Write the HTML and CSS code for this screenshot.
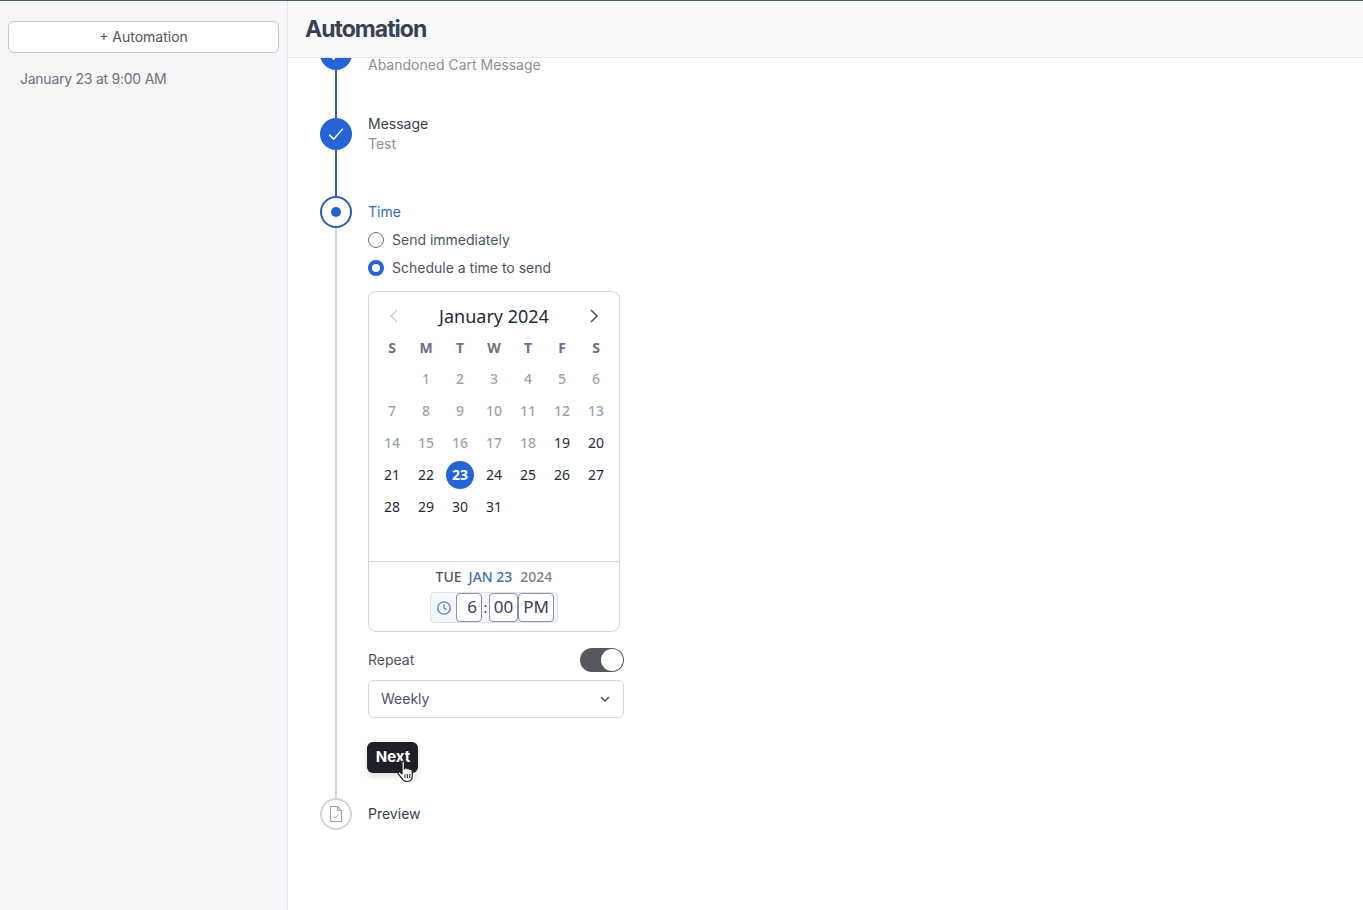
FILE: index.html
```html
<!DOCTYPE html>
<html>
<head>
    <title>Automation</title>
    <link rel="stylesheet" href="styles.css">
</head>
<body>
    <aside class="sidebar">
        <button class="add-button">+ Automation</button>
        <p class="sidebar-item">January 23 at 9:00 AM</p>
    </aside>
    <main class="main">
        <header class="topbar">
            <h1>Automation</h1>
        </header>
        <div class="scroller">
            <div class="steps">
                <div class="step step-first">
                    <div class="rail">
                        <span class="circle circle-done">
                            <svg width="20" height="20" viewBox="0 0 16 16"><path d="M2.5 8.5l3.6 3.6 7.4-8.4" fill="none" stroke="#fff" stroke-width="1.2"/></svg>
                        </span>
                        <span class="line"></span>
                    </div>
                    <div class="step-text-first">Abandoned Cart Message</div>
                </div>
                <div class="step step-second">
                    <div class="rail">
                        <span class="circle circle-done">
                            <svg width="20" height="20" viewBox="0 0 16 16"><path d="M2.5 8.5l3.6 3.6 7.4-8.4" fill="none" stroke="#fff" stroke-width="1.2"/></svg>
                        </span>
                        <span class="line"></span>
                    </div>
                    <div class="step-text">
                        <div class="step-title">Message</div>
                        <div class="step-sub">Test</div>
                    </div>
                </div>
                <div class="step">
                    <div class="rail">
                        <span class="circle circle-current"><span class="dot"></span></span>
                        <span class="line line-todo"></span>
                    </div>
                    <div class="step-body">
                        <div class="step-title step-title-current">Time</div>
                        <label class="radio-row"><span class="radio"></span><span class="radio-label">Send immediately</span></label>
                        <label class="radio-row"><span class="radio radio-on"></span><span class="radio-label">Schedule a time to send</span></label>

                        <div class="calendar">
                            <div class="cal-head">
                                <svg width="16" height="16" viewBox="0 0 16 16"><path d="M11 2L5 8l6 6" fill="none" stroke="#d1d5db" stroke-width="1.6"/></svg>
                                <span class="cal-month">January 2024</span>
                                <svg width="16" height="16" viewBox="0 0 16 16"><path d="M5 2l6 6-6 6" fill="none" stroke="#4b5563" stroke-width="1.6"/></svg>
                            </div>
                            <div class="cal-grid cal-labels">
                                <span>S</span><span>M</span><span>T</span><span>W</span><span>T</span><span>F</span><span>S</span>
                            </div>
                            <div class="cal-grid cal-days">
                                <span></span>
                                <span class="off">1</span><span class="off">2</span><span class="off">3</span><span class="off">4</span><span class="off">5</span><span class="off">6</span>
                                <span class="off">7</span><span class="off">8</span><span class="off">9</span><span class="off">10</span><span class="off">11</span><span class="off">12</span><span class="off">13</span>
                                <span class="off">14</span><span class="off">15</span><span class="off">16</span><span class="off">17</span><span class="off">18</span><span>19</span><span>20</span>
                                <span>21</span><span>22</span><span class="today">23</span><span>24</span><span>25</span><span>26</span><span>27</span>
                                <span>28</span><span>29</span><span>30</span><span>31</span>
                            </div>
                            <div class="cal-foot">
                                <div class="cal-date"><span>TUE</span><span class="cal-date-blue">JAN 23</span><span class="cal-date-year">2024</span></div>
                                <div class="time-box">
                                    <svg class="clock" width="16" height="16" viewBox="0 0 16 16"><circle cx="8" cy="8" r="6.2" fill="none" stroke="#4f86c6" stroke-width="1.3"/><path d="M8 4.400V8l2.400 1.600" fill="none" stroke="#4f86c6" stroke-width="1.3"/></svg>
                                    <span class="time-field time-hour">6</span>
                                    <span class="time-colon">:</span>
                                    <span class="time-field time-min">00</span>
                                    <span class="time-field time-ampm">PM</span>
                                </div>
                            </div>
                        </div>

                        <div class="repeat-row">
                            <span class="nudge-up">Repeat</span>
                            <span class="toggle"><span class="knob"></span></span>
                        </div>
                        <div class="select">
                            <span class="nudge-up">Weekly</span>
                            <svg width="12" height="12" viewBox="0 0 12 12"><path d="M2 4l4 4 4-4" fill="none" stroke="#4b5563" stroke-width="1.5"/></svg>
                        </div>
                        <div class="next-wrap">
                            <button class="next-button">Next</button>
                            <svg class="cursor" width="18" height="24" viewBox="0 0 18 24"><path d="M5 2.200c0-1.500 2.400-1.500 2.400 0v7l.3-1c1.400-.6 2.300-.2 2.500.6 1.300-.6 2.200-.2 2.500.7 1.400-.5 2.500.1 2.500 1.500v5.200c0 3-2 5.300-5 5.300-3 0-4.300-1.200-5.500-3.300L1.300 13.800c-.8-1.500.9-2.800 2.200-1.500L5 14z" fill="#fff" stroke="#1a1c22" stroke-width="1.200" stroke-linejoin="round"/><path d="M8 14v4M10.400 14v4M12.800 14v4" stroke="#1a1c22" stroke-width="1"/></svg>
                        </div>
                    </div>
                </div>
                <div class="step">
                    <div class="rail">
                        <span class="circle circle-todo">
                            <svg width="18" height="18" viewBox="0 0 18 18"><path d="M3.500 1.500h7l4 4v11h-11zM10.500 1.500v4h4" fill="none" stroke="#9ca3af" stroke-width="1.100"/><path d="M6.500 11l2 2 3-3.500" fill="none" stroke="#9ca3af" stroke-width="1"/></svg>
                        </span>
                    </div>
                    <div class="step-body">
                        <div class="step-title">Preview</div>
                    </div>
                </div>
            </div>
        </div>
    </main>
</body>
</html>
```

FILE: styles.css
```css
* {
    box-sizing: border-box;
}
body {
    font-family: 'Inter', 'Liberation Sans', sans-serif;
    font-size: 14px;
    color: #374151;
    background-color: #fff;
    display: flex;
    height: 100vh;
    margin: 0;
    overflow: hidden;
    border-top: 1px solid #4b6072;
}
.nudge-up {
    margin-top: -2px;
}

/* sidebar */
.sidebar {
    width: 288px;
    flex-shrink: 0;
    padding: 20px 8px 0;
    background-color: #f4f6f8;
    border-right: 1px solid #e5e7eb;
}
.add-button {
    display: block;
    width: 271px;
    height: 32px;
    padding: 0 0 2px;
    background-color: #fff;
    border: 1px solid #c4c8ce;
    border-radius: 6px;
    color: #4b5563;
    font-family: inherit;
    font-size: 14px;
}
.sidebar-item {
    margin: 16px 0 0 12px;
    line-height: 20px;
    letter-spacing: -0.25px;
    color: #6b7280;
}

/* main */
.main {
    flex: 1;
    display: flex;
    flex-direction: column;
    min-width: 0;
}
.topbar {
    height: 57px;
    flex-shrink: 0;
    padding: 0 0 0 17px;
    display: flex;
    align-items: center;
    background-color: #f9fafb;
    border-bottom: 1px solid #e5e7eb;
}
.topbar h1 {
    margin: 0 0 1px;
    font-size: 23px;
    font-weight: 700;
    letter-spacing: -1px;
    color: #374151;
}
.scroller {
    flex: 1;
    overflow: hidden;
    padding-left: 32px;
}
.steps {
    margin-top: -20px;
}

/* steps */
.step {
    display: flex;
    gap: 16px;
}
.step-first {
    height: 80px;
}
.step-second {
    height: 78px;
}
.rail {
    width: 32px;
    flex-shrink: 0;
    display: flex;
    flex-direction: column;
    align-items: center;
}
.circle {
    width: 32px;
    height: 32px;
    flex-shrink: 0;
    border-radius: 50%;
    display: flex;
    align-items: center;
    justify-content: center;
}
.circle-done {
    background-color: #2563d9;
}
.circle-current {
    background-color: #fff;
    border: 2px solid #2a5fa8;
}
.dot {
    width: 10px;
    height: 10px;
    border-radius: 50%;
    background-color: #2560c8;
}
.circle-todo {
    background-color: #fff;
    border: 2px solid #d1d5db;
}
.line {
    flex: 1;
    width: 2px;
    background-color: #2f5f96;
}
.line-todo {
    background-color: #d1d5db;
}
.step-text {
    margin-top: -4px;
}
.step-text-first {
    margin-top: 21px;
    line-height: 12px;
    height: 12px;
    color: #8a9099;
}
.step-body {
    padding-top: 6px;
    flex: 0 0 256px;
    padding-bottom: 25px;
}
.step-title {
    line-height: 20px;
    color: #374151;
}
.step-title-current {
    color: #2f6bc0;
}
.step-sub {
    line-height: 20px;
    color: #8a9099;
}

/* radios */
.radio-row {
    display: flex;
    align-items: center;
    gap: 8px;
    height: 28px;
    color: #4b5563;
}
.step-title-current + .radio-row {
    margin-top: 4px;
}
.radio {
    width: 16px;
    height: 16px;
    border: 1px solid #6b7280;
    border-radius: 50%;
    background-color: #fff;
}
.radio-on {
    border: 4px solid #2563d9;
}
.radio-label {
    line-height: 20px;
    margin-top: -1px;
}

/* calendar */
.calendar {
    width: 252px;
    margin-top: 9px;
    padding-top: 7px;
    border: 1px solid #d1d5db;
    border-radius: 8px;
    font-family: 'Noto Sans', 'Open Sans', sans-serif;
}
.cal-head {
    height: 34px;
    padding: 0 17px;
    display: flex;
    align-items: center;
    justify-content: space-between;
}
.cal-month {
    font-size: 18px;
    color: #1f2937;
}
.cal-grid {
    display: grid;
    grid-template-columns: repeat(7, 34px);
    padding-left: 6px;
    text-align: center;
}
.cal-labels {
    height: 30px;
    line-height: 30px;
    font-size: 14px;
    font-weight: 700;
    color: #6b7280;
}
.cal-days {
    grid-auto-rows: 32px;
    height: 192px;
    margin-bottom: 6px;
    font-size: 14px;
    line-height: 18px;
    color: #1f2937;
    align-items: center;
    justify-items: center;
}
.cal-days span {
    margin-top: -1px;
}
.cal-days .off {
    color: #9ca3af;
    font-weight: 500;
}
.cal-days .today {
    width: 28px;
    height: 28px;
    margin-top: 0;
    line-height: 27px;
    border-radius: 50%;
    background-color: #2563d9;
    color: #fff;
    font-weight: 700;
}
.cal-foot {
    padding: 5px 0 8px;
    border-top: 1px solid #d1d5db;
    display: flex;
    flex-direction: column;
    align-items: center;
}
.cal-date {
    display: flex;
    gap: 7px;
    line-height: 20px;
    font-size: 14px;
    font-weight: 500;
    color: #4b5563;
}
.cal-date-blue {
    color: #3f6fb0;
}
.cal-date-year {
    margin-left: 1px;
    color: #7b828c;
}
.time-box {
    width: 128px;
    height: 31px;
    margin-top: 5px;
    display: flex;
    align-items: center;
    background-color: #f3f7fb;
    border: 1px solid #dde2e8;
    border-radius: 4px;
}
.clock {
    margin-left: 5px;
    margin-right: 4px;
    flex-shrink: 0;
}
.time-field {
    height: 29px;
    line-height: 25px;
    background-color: #fff;
    border: 1px solid #8b929b;
    border-radius: 4px;
    font-size: 17px;
    color: #374151;
    text-align: right;
    padding-right: 4px;
}
.time-hour {
    width: 26px;
}
.time-min {
    width: 29px;
    text-align: center;
    padding: 0;
}
.time-ampm {
    width: 36px;
    text-align: center;
    padding: 0;
}
.time-colon {
    width: 7px;
    text-align: center;
    color: #374151;
    line-height: 1;
}

/* repeat */
.repeat-row {
    display: flex;
    align-items: center;
    justify-content: space-between;
    margin-top: 16px;
    height: 24px;
    color: #4b5563;
}
.toggle {
    width: 44px;
    height: 24px;
    padding: 1px;
    display: flex;
    justify-content: flex-end;
    border-radius: 12px;
    background-color: #55585f;
}
.knob {
    width: 22px;
    height: 22px;
    border-radius: 50%;
    background-color: #fff;
}
.select {
    height: 38px;
    margin-top: 8px;
    padding: 0 12px;
    display: flex;
    align-items: center;
    justify-content: space-between;
    border: 1px solid #d1d5db;
    border-radius: 6px;
    color: #4b5563;
}

/* next button */
.next-wrap {
    position: relative;
    margin-top: 24px;
    margin-left: -1px;
    width: 51px;
    height: 31px;
}
.next-button {
    display: block;
    width: 51px;
    height: 31px;
    padding: 0 0 2px 1px;
    background-color: #1d2029;
    border: none;
    border-radius: 6px;
    color: #fff;
    font-family: inherit;
    font-size: 15px;
    font-weight: 700;
    box-shadow: 0 3px 6px rgba(0, 0, 0, 0.15);
}
.cursor {
    position: absolute;
    left: 30px;
    top: 18px;
}
```
